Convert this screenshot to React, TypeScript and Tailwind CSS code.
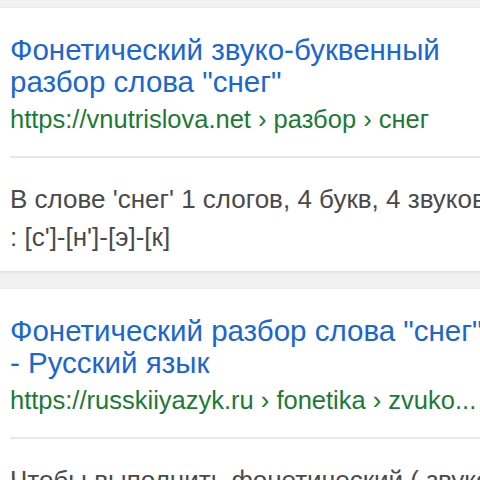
const font = "font-['Liberation_Sans',Arial,sans-serif]";

function Result({
  title,
  url,
  snippet,
}: {
  title: string[];
  url: string;
  snippet: string[];
}) {
  return (
    <div className="bg-white shadow-[0_1px_3px_rgba(0,0,0,0.12)]">
      <div className="pt-[26px] pb-[22px] pl-[10px]">
        <div className="text-[29.5px] leading-[32px] text-[#1a66d2] whitespace-nowrap">
          {title.map((l) => (
            <div key={l}>{l}</div>
          ))}
        </div>
        <div className="mt-[6px] text-[25.5px] leading-[30px] text-[#1b7a34] whitespace-nowrap">
          {url}
        </div>
      </div>
      <div className="ml-[10px] h-[2px] bg-[#e8e8e8]" />
      <div className="pt-[22px] pb-[15px] pl-[10px] text-[26px] leading-[38px] text-[#4a4a4a] whitespace-nowrap">
        {snippet.map((l) => (
          <div key={l}>{l}</div>
        ))}
      </div>
    </div>
  );
}

export default function App() {
  return (
    <div className={`w-[480px] h-[480px] overflow-hidden bg-[#f1f1f1] pt-[8px] ${font}`}>
      <div className="flex flex-col gap-[18px]">
        <Result
          title={["Фонетический звуко-буквенный", 'разбор слова "снег"']}
          url="https://vnutrislova.net › разбор › снег"
          snippet={["В слове 'снег' 1 слогов, 4 букв, 4 звуков", ": [с']-[н']-[э]-[к]"]}
        />
        <Result
          title={['Фонетический разбор слова "снег"', "- Русский язык"]}
          url="https://russkiiyazyk.ru › fonetika › zvuko..."
          snippet={["Чтобы выполнить фонетический ( звуко-"]}
        />
      </div>
    </div>
  );
}
